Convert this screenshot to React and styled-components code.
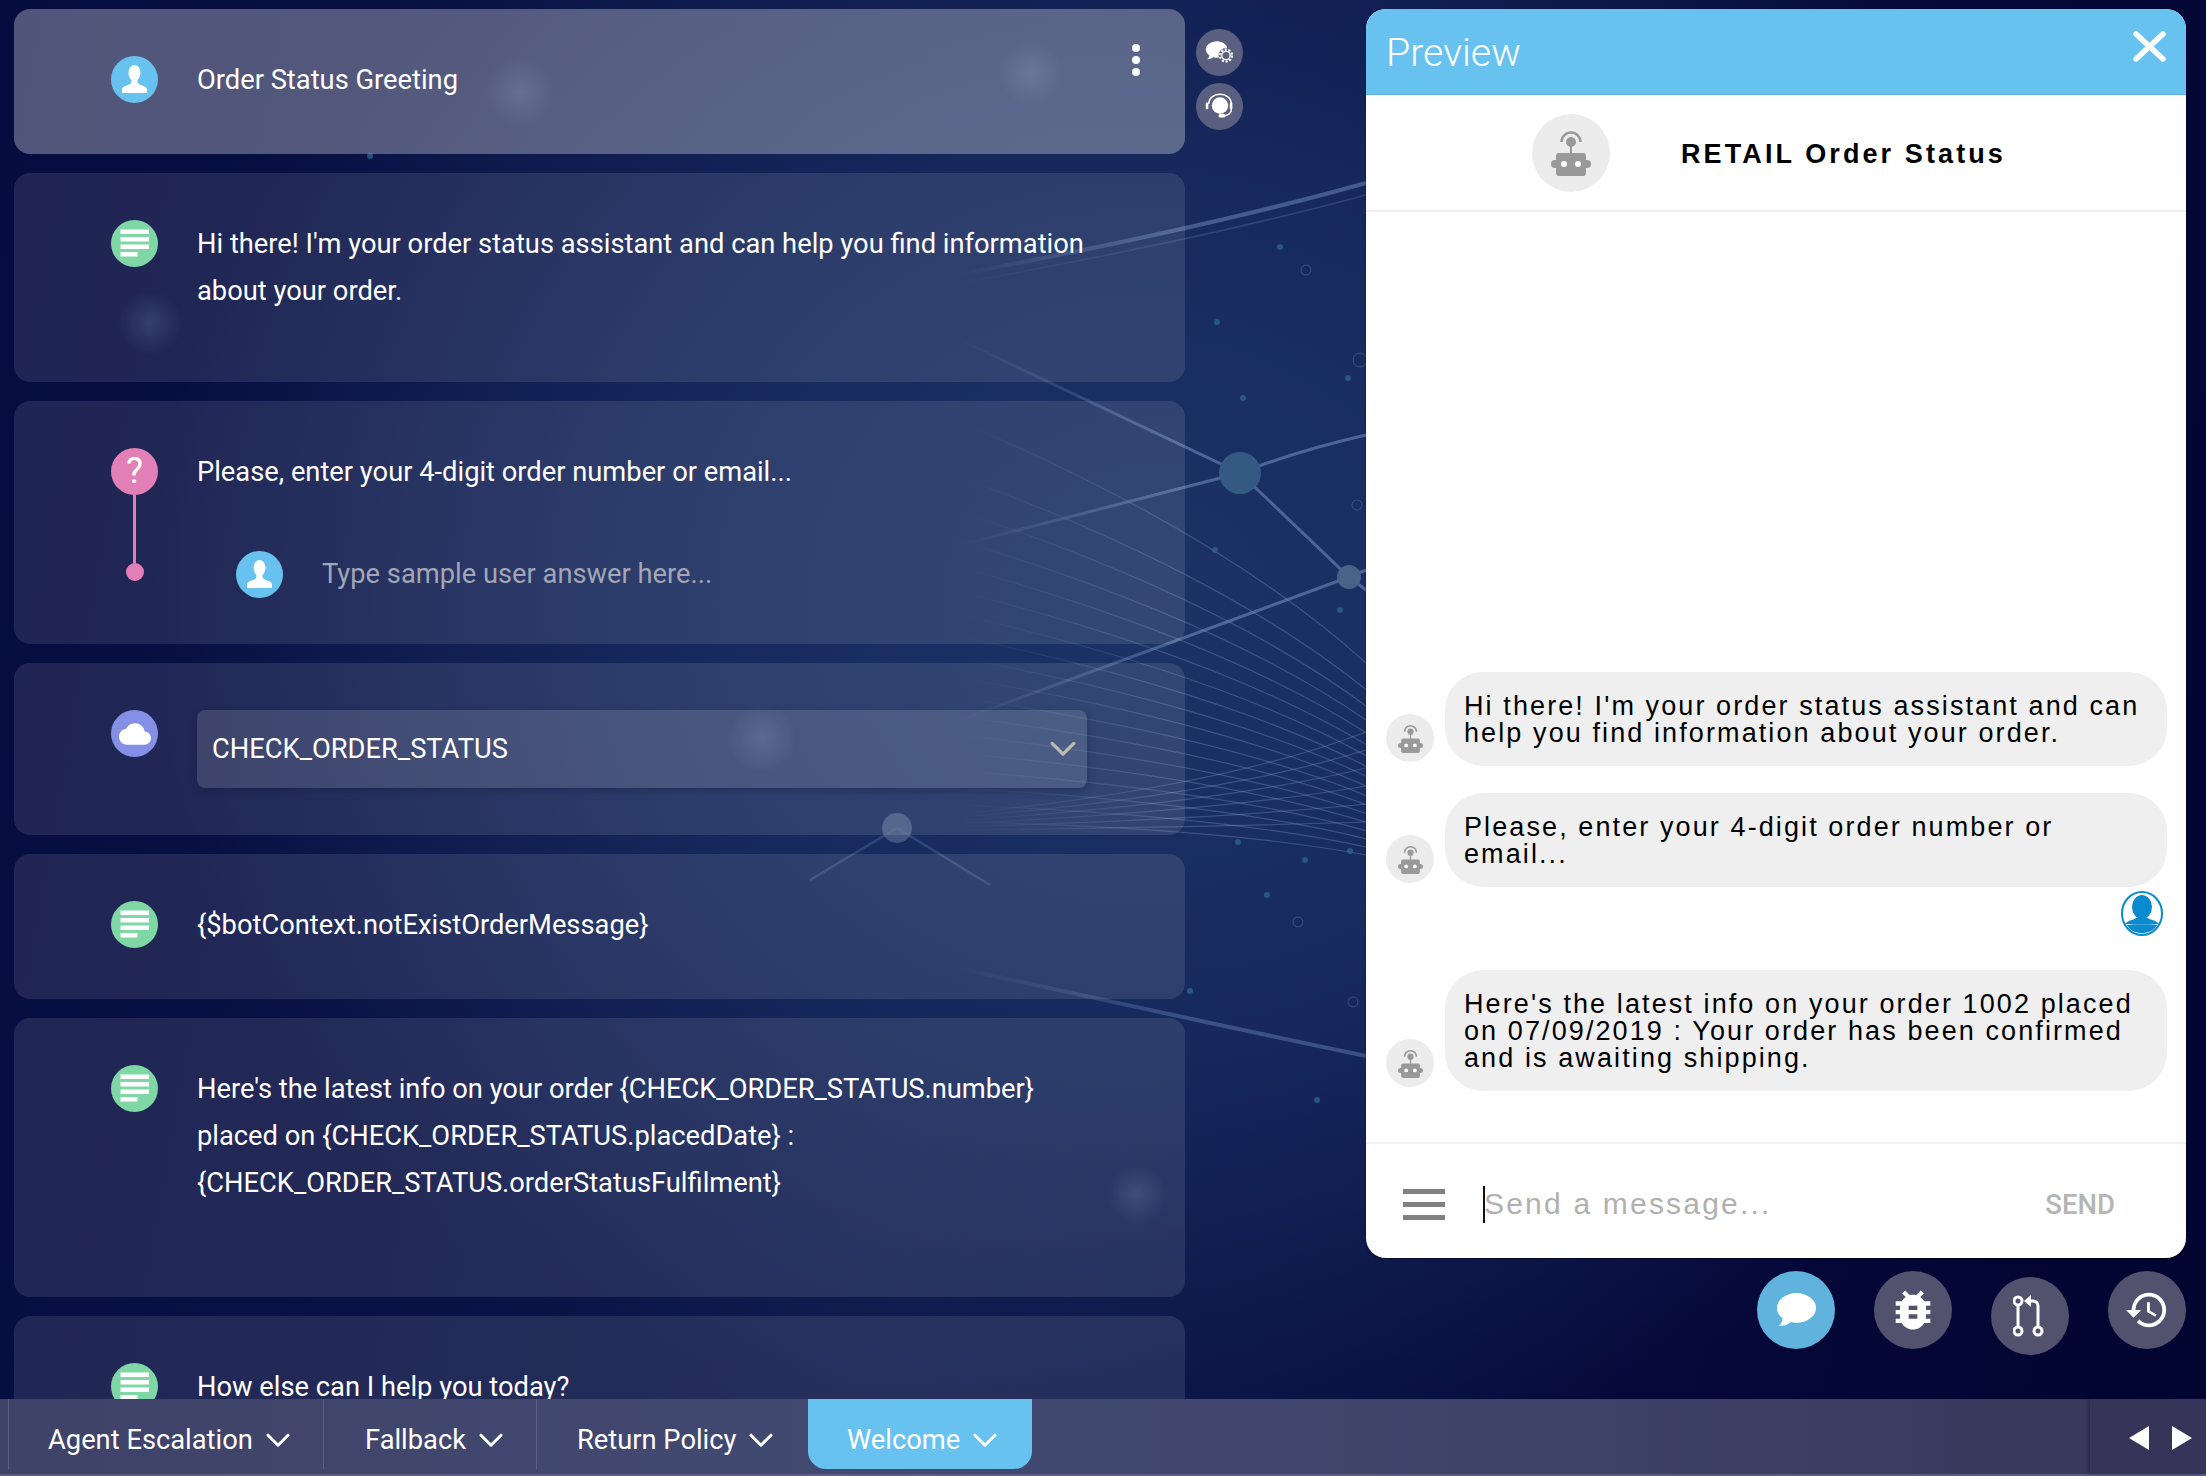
import React from 'react';
import styled, { createGlobalStyle } from 'styled-components';
import { MdBugReport, MdCloud, MdHistory } from 'react-icons/md';

const GlobalStyle = createGlobalStyle`
    html, body {
        margin: 0;
        padding: 0;
        background: #070d40;
    }
    * {
        box-sizing: border-box;
    }
`;

const Page = styled.div`
    position: relative;
    width: 2206px;
    height: 1476px;
    overflow: hidden;
    display: flex;
    flex-direction: column;
    font-family: Roboto, "Liberation Sans", sans-serif;
    background:
        radial-gradient(ellipse 1000px 900px at 1150px 600px, #1c3366 0, #172a5e 45%, rgba(10, 18, 70, 0) 100%),
        linear-gradient(100deg, #060c40 0, #0d1648 45%, #050838 80%, #020430 100%);
`;

const Backdrop = styled.svg`
    position: absolute;
    inset: 0;
    width: 2206px;
    height: 1476px;
`;

const Main = styled.main`
    position: relative;
    flex: 1;
    min-height: 0;
    display: flex;
    overflow: hidden;
`;

// FLOW COLUMN
const Flow = styled.section`
    width: 1171px;
    margin-left: 14px;
    padding-top: 9px;
    display: flex;
    flex-direction: column;
    gap: 19px;
    flex-shrink: 0;
`;

const Card = styled.article`
    position: relative;
    flex-shrink: 0;
    height: ${p => p.$height}px;
    padding: 47px 0 0 97px;
    border-radius: 16px;
    background: ${p => (p.$active ? 'rgba(255, 255, 255, 0.3)' : 'rgba(255, 255, 255, 0.1)')};
`;

const Row = styled.div`
    display: flex;
    align-items: flex-start;
    gap: 39px;
`;

const SampleRow = styled(Row)`
    margin: 55px 0 0 125px;
    gap: 39px;
`;

const NodeIcon = styled.span`
    position: relative;
    flex-shrink: 0;
    width: 47px;
    height: 47px;
    border-radius: 50%;
    display: flex;
    align-items: center;
    justify-content: center;
    color: #fff;
    background: ${p => p.$color};
    font-size: 36px;
    line-height: 47px;
`;

const Connector = styled.span`
    position: absolute;
    left: 22px;
    top: 47px;
    width: 3px;
    height: 76px;
    background: #e27fb6;

    &::after {
        content: '';
        position: absolute;
        left: -7.5px;
        bottom: -10px;
        width: 18px;
        height: 18px;
        border-radius: 50%;
        background: #e27fb6;
    }
`;

const Message = styled.p`
    margin: 0;
    padding-top: ${p => (p.$muted ? 0 : 1)}px;
    max-width: 900px;
    color: ${p => (p.$muted ? '#a2a6b6' : '#fff')};
    font-size: 27.3px;
    line-height: 47px;
`;

const DotsButton = styled.span`
    position: absolute;
    top: 35px;
    right: 45px;
    display: flex;
    flex-direction: column;
    gap: 4px;

    i {
        width: 8px;
        height: 8px;
        border-radius: 50%;
        background: #fff;
    }
`;

const Select = styled.div`
    width: 890px;
    height: 78px;
    padding: 0 11px 0 15px;
    border-radius: 8px;
    display: flex;
    align-items: center;
    justify-content: space-between;
    color: #fff;
    font-size: 27.3px;
    background: rgba(255, 255, 255, 0.13);
    box-shadow: 0 3px 8px rgba(10, 15, 50, 0.3);
`;

// SIDE RAIL
const Rail = styled.aside`
    margin-left: 11px;
    padding-top: 29px;
    display: flex;
    flex-direction: column;
    gap: 7px;
`;

const RailButton = styled.button`
    width: 47px;
    height: 47px;
    padding: 0;
    border: 0;
    border-radius: 50%;
    display: flex;
    align-items: center;
    justify-content: center;
    background: #5a5f80;
`;

// PREVIEW
const PreviewColumn = styled.div`
    margin-left: auto;
    margin-right: 20px;
    padding-top: 9px;
    width: 820px;
    display: flex;
    flex-direction: column;
`;

const Preview = styled.div`
    height: 1249px;
    border-radius: 20px;
    overflow: hidden;
    display: flex;
    flex-direction: column;
    background: #fff;
    box-shadow: 0 1px 2px rgba(0, 0, 0, 0.5);
`;

const PreviewHeader = styled.header`
    height: 86px;
    flex-shrink: 0;
    padding: 2px 20px 0 20px;
    display: flex;
    align-items: center;
    justify-content: space-between;
    background: #67c2f0;
    border-bottom: 1px solid #5eb3dd;
`;

const PreviewTitle = styled.h2`
    margin: 0;
    color: #fff;
    font-size: 39.3px;
    font-weight: 300;
`;

const CloseIcon = styled.svg`
    margin-bottom: 13px;
`;

const BotBar = styled.div`
    height: 117px;
    flex-shrink: 0;
    padding: 0 0 0 166px;
    display: flex;
    align-items: center;
    gap: 71px;
    border-bottom: 2px solid #f0f0f0;
`;

const BotName = styled.div`
    padding-top: 4px;
    font-family: "Liberation Sans", Arial, sans-serif;
    font-size: 27px;
    font-weight: 700;
    letter-spacing: 3.1px;
    color: #000;
`;

const BotAvatar = styled.span`
    flex-shrink: 0;
    width: ${p => p.$size}px;
    height: ${p => p.$size}px;
    border-radius: 50%;
    display: flex;
    align-items: center;
    justify-content: center;
    background: #ececec;
`;

const Messages = styled.div`
    flex: 1;
    min-height: 0;
    padding: 0 19px 51px 20px;
    display: flex;
    flex-direction: column;
    justify-content: flex-end;
`;

const BotRow = styled.div`
    display: flex;
    align-items: flex-end;
    gap: 11px;
    margin-top: ${p => p.$top || 0}px;

    ${BotAvatar} {
        margin-bottom: 4px;
    }
`;

const Bubble = styled.div`
    flex: 1;
    padding: 21px 19px 19px;
    border-radius: 38px;
    color: #000;
    background: #efefef;
    font-family: "Liberation Sans", Arial, sans-serif;
    font-size: 27px;
    line-height: 27px;
    letter-spacing: 2.1px;
`;

const UserRow = styled.div`
    display: flex;
    justify-content: flex-end;
    padding: 4px 4px 0 0;
    height: 50px;
`;

const Composer = styled.div`
    height: 116px;
    flex-shrink: 0;
    padding: 6px 71px 0 37px;
    display: flex;
    align-items: center;
    border-top: 2px solid #f2f2f2;
`;

const Burger = styled.span`
    width: 42px;
    display: flex;
    flex-direction: column;
    gap: 8px;
    margin-right: 38px;

    i {
        height: 5px;
        background: #808080;
    }
`;

const Caret = styled.span`
    width: 2px;
    height: 37px;
    background: #111;
`;

const Placeholder = styled.span`
    flex: 1;
    margin-left: -1px;
    color: #b0b0b0;
    font-family: "Liberation Sans", Arial, sans-serif;
    font-size: 30px;
    letter-spacing: 2.2px;
`;

const SendButton = styled.span`
    color: #b5b5b5;
    font-size: 27.5px;
    font-weight: 500;
`;

const ActionBar = styled.div`
    margin-top: 13px;
    display: flex;
    justify-content: flex-end;
    gap: 39px;
`;

const ActionButton = styled.button`
    width: 78px;
    height: 78px;
    padding: 0;
    border: 0;
    border-radius: 50%;
    display: flex;
    align-items: center;
    justify-content: center;
    color: #fff;
    background: ${p => (p.$active ? '#5fb3dc' : '#52526f')};
    margin-top: ${p => (p.$drop ? 6 : 0)}px;
`;

// TABS
const TabBar = styled.nav`
    position: relative;
    height: 77px;
    flex-shrink: 0;
    display: flex;
    background: linear-gradient(90deg, #3f4268 0, #424a72 40%, #3e4269 70%, #38365a 100%);
    border-bottom: 2px solid #5a5d80;
`;

const Tabs = styled.div`
    flex: 1;
    display: flex;
    padding-left: 8px;
`;

const Tab = styled.div`
    width: ${p => p.$width}px;
    height: 70px;
    flex-shrink: 0;
    padding: 12px 0 0 ${p => p.$inset}px;
    display: flex;
    align-items: center;
    gap: 13px;
    color: #fff;
    font-size: 27.3px;
    border-left: ${p => (p.$active ? '0' : '1px solid #5c6085')};
    border-radius: ${p => (p.$active ? '0 0 18px 18px' : '0')};
    background: ${p => (p.$active ? '#67c2f0' : 'transparent')};
`;

const Pager = styled.div`
    width: 116px;
    flex-shrink: 0;
    padding: 2px 14px 0 39px;
    display: flex;
    align-items: center;
    justify-content: space-between;
    background: #37345a;
    box-shadow: -2px 0 3px rgba(30, 28, 60, 0.5);
`;

const PagerArrow = styled.span`
    width: 0;
    height: 0;
    border-top: 12px solid transparent;
    border-bottom: 12px solid transparent;
    border-right: ${p => (p.$left ? '20px solid #fff' : '0')};
    border-left: ${p => (p.$left ? '0' : '20px solid #fff')};
`;

// DRAWN ICONS
const PersonIcon = () => (
    <svg width="47" height="47" viewBox="0 0 47 47">
        <ellipse cx="23.5" cy="17" rx="6" ry="8" fill="#fff" />
        <path d="M11 37v-3c0-3 3-4 6-5 3-1 3.5-2 3.5-5h6c0 3 .5 4 3.5 5 3 1 6 2 6 5v3z" fill="#fff" />
    </svg>
);

const LinesIcon = () => (
    <svg width="47" height="47" viewBox="0 0 47 47" fill="#fff">
        <rect x="9.5" y="9.5" width="28.5" height="4.5" />
        <rect x="9.5" y="17" width="28.5" height="4.5" />
        <rect x="9.5" y="24.5" width="28.5" height="4.5" />
        <rect x="9.5" y="32" width="17" height="4.5" />
    </svg>
);

const Chevron = ({ size = 24, color = '#fff', weight = 3 }) => (
    <svg width={size} height={size * 0.6} viewBox="0 0 24 14" fill="none">
        <path d="M2 2l10 10L22 2" stroke={color} strokeWidth={weight} strokeLinecap="round" strokeLinejoin="round" />
    </svg>
);

const RobotIcon = ({ width, height }) => (
    <svg width={width} height={height} viewBox="0 0 40 46" fill="#999">
        <path d="M10.5 12A9.5 9.5 0 0 1 29.5 12" fill="none" stroke="#999" strokeWidth="2.5" />
        <circle cx="20" cy="12" r="5" />
        <rect x="19" y="14" width="2" height="10" />
        <rect x="5" y="23" width="30" height="23" rx="3" />
        <rect x="0" y="30" width="40" height="8" rx="4" />
        <circle cx="13" cy="34" r="3" fill="#fff" />
        <circle cx="27" cy="34" r="3" fill="#fff" />
    </svg>
);

const ChatGearIcon = () => (
    <svg width="30" height="27" viewBox="0 0 40 36">
        <path d="M16 3c8 0 14 5 14 11s-6 11-14 11c-2 0-3 0-5-1-2 2-5 3-8 3 2-2 3-4 3-5-3-2-5-5-5-8C1 8 8 3 16 3z" fill="#fff" />
        <circle cx="28" cy="22" r="10" fill="#5a5f80" />
        <circle cx="28" cy="22" r="8" fill="none" stroke="#fff" strokeWidth="3" strokeDasharray="2.8 2.2" />
        <circle cx="28" cy="22" r="5.5" fill="none" stroke="#fff" strokeWidth="1.8" />
    </svg>
);

const HeadsetIcon = () => (
    <svg width="30" height="30" viewBox="0 0 40 40">
        <circle cx="20" cy="18" r="11" fill="#fff" />
        <path d="M5 16C5 8 12 3 20 3s15 5 15 13v8c0 4-5 7-10 8" fill="none" stroke="#fff" strokeWidth="2" />
        <rect x="1" y="14" width="3.5" height="9" rx="1.5" fill="#fff" />
        <rect x="33" y="14" width="3.5" height="9" rx="1.5" fill="#fff" />
        <rect x="18" y="29" width="9" height="5" rx="2.5" fill="#fff" />
    </svg>
);

const ChatIcon = () => (
    <svg width="40" height="34" viewBox="0 0 40 34" fill="#fff">
        <ellipse cx="20.5" cy="15" rx="19.5" ry="15" />
        <path d="M3 33c2-2 4-6 4-11l8 7c-4 3-8 4-12 4z" />
    </svg>
);

const BranchIcon = () => (
    <svg width="34" height="42" viewBox="0 0 34 42" fill="none" stroke="#fff" strokeWidth="3">
        <circle cx="5" cy="6" r="4" />
        <circle cx="5" cy="36" r="4" />
        <circle cx="25" cy="36" r="4" />
        <path d="M5 10v22" />
        <path d="M25 32V11c0-3-2-5-5-5h-4" />
        <path d="M18 0l-7 6 7 6z" fill="#fff" stroke="none" />
    </svg>
);

const UserBadge = () => (
    <svg width="42" height="45" viewBox="0 0 42 45">
        <ellipse cx="21" cy="22.5" rx="20" ry="21.5" fill="#fff" stroke="#0a8bcf" strokeWidth="2" />
        <ellipse cx="21" cy="16" rx="10" ry="12" fill="#0a8bcf" />
        <path d="M4 33c3-4 9-4 11-6h12c2 2 8 2 11 6-3 1-31 1-34 0z" fill="#0a8bcf" />
        <path d="M6 34h30c-3 6-9 8-15 8s-12-2-15-8z" fill="#0a8bcf" />
    </svg>
);

// BACKGROUND ART
const fanLines = Array.from({ length: 18 }, (_, i) => {
    const t = Math.pow(i / 17, 0.7);
    return `M800 ${360 + t * 460} Q1180 ${495 + t * 325} 1366 ${663 + t * 192}`;
});
const riseLines = Array.from({ length: 6 }, (_, i) => `M800 ${832 - i} Q1180 ${828 - i * 5} 1366 ${822 - i * 18}`);
const motes = [[1280, 247], [1217, 322], [1243, 398], [1348, 378], [1215, 550], [1340, 610], [1238, 842], [1305, 860], [1267, 895], [1350, 851], [1190, 991], [1317, 1100], [370, 156]];
const glows = [[520, 92, 35], [150, 323, 32], [1031, 73, 32], [762, 738, 34], [1137, 1195, 30]];

function BackgroundArt() {
    return (
        <Backdrop viewBox="0 0 2206 1476">
            <defs>
                <radialGradient id="glow">
                    <stop offset="0" stopColor="#7f9cc4" stopOpacity="0.2" />
                    <stop offset="1" stopColor="#7f9cc4" stopOpacity="0" />
                </radialGradient>
                <linearGradient id="fade" gradientUnits="userSpaceOnUse" x1="960" y1="0" x2="1190" y2="0">
                    <stop offset="0" stopColor="#8aa6d8" stopOpacity="0" />
                    <stop offset="1" stopColor="#8aa6d8" stopOpacity="1" />
                </linearGradient>
            </defs>
            <g fill="none" stroke="url(#fade)">
                {fanLines.map(d => <path key={d} d={d} strokeOpacity="0.3" strokeWidth="1.2" />)}
                {riseLines.map(d => <path key={d} d={d} strokeOpacity="0.3" strokeWidth="1.2" />)}
                <path d="M900 285Q1180 235 1366 183" strokeOpacity="0.4" strokeWidth="4" />
                <path d="M950 285Q1200 240 1366 195" strokeOpacity="0.2" strokeWidth="1.5" />
                <path d="M960 340L1240 473L1349 577L1366 590" strokeOpacity="0.45" strokeWidth="3" />
                <path d="M960 545L1240 473Q1300 450 1366 435" strokeOpacity="0.45" strokeWidth="3" />
                <path d="M960 720L1349 577L1366 570" strokeOpacity="0.45" strokeWidth="3" />
                <path d="M900 955Q1100 1000 1366 1056" strokeOpacity="0.32" strokeWidth="4" />
            </g>
            <g stroke="#8aa6d8" strokeOpacity="0.22" strokeWidth="2.5" fill="none">
                <path d="M810 880L897 828L990 885" />
            </g>
            <circle cx="1240" cy="473" r="21" fill="#345a84" />
            <circle cx="1349" cy="577" r="12" fill="#4a6288" />
            <circle cx="897" cy="828" r="15" fill="#56688f" fillOpacity="0.7" />
            {motes.map(([x, y]) => <circle key={x + '-' + y} cx={x} cy={y} r="3" fill="#2f6a8e" fillOpacity="0.7" />)}
            <g fill="none" stroke="#4a6a9a" strokeOpacity="0.6">
                <circle cx="1306" cy="270" r="5" />
                <circle cx="1360" cy="360" r="7" />
                <circle cx="1357" cy="505" r="5" />
                <circle cx="1298" cy="922" r="5" />
                <circle cx="1353" cy="1002" r="5" />
            </g>
            {glows.map(([x, y, r]) => <circle key={x + '-' + y} cx={x} cy={y} r={r} fill="url(#glow)" />)}
        </Backdrop>
    );
}

export default function App() {
    return (
        <Page>
            <GlobalStyle />
            <BackgroundArt />
            <Main>
                <Flow>
                    <Card $height={145} $active>
                        <Row>
                            <NodeIcon $color="#67c2f0"><PersonIcon /></NodeIcon>
                            <Message>Order Status Greeting</Message>
                        </Row>
                        <DotsButton><i /><i /><i /></DotsButton>
                    </Card>
                    <Card $height={209}>
                        <Row>
                            <NodeIcon $color="#7fd7a6"><LinesIcon /></NodeIcon>
                            <Message>Hi there! I'm your order status assistant and can help you find information about your order.</Message>
                        </Row>
                    </Card>
                    <Card $height={243}>
                        <Row>
                            <NodeIcon $color="#e27fb6">?<Connector /></NodeIcon>
                            <Message>Please, enter your 4-digit order number or email...</Message>
                        </Row>
                        <SampleRow>
                            <NodeIcon $color="#67c2f0"><PersonIcon /></NodeIcon>
                            <Message $muted>Type sample user answer here...</Message>
                        </SampleRow>
                    </Card>
                    <Card $height={172}>
                        <Row>
                            <NodeIcon $color="#8490e6"><MdCloud size={32} /></NodeIcon>
                            <Select>
                                CHECK_ORDER_STATUS
                                <Chevron size={26} color="#bdb9b5" />
                            </Select>
                        </Row>
                    </Card>
                    <Card $height={145}>
                        <Row>
                            <NodeIcon $color="#7fd7a6"><LinesIcon /></NodeIcon>
                            <Message>{'{$botContext.notExistOrderMessage}'}</Message>
                        </Row>
                    </Card>
                    <Card $height={279}>
                        <Row>
                            <NodeIcon $color="#7fd7a6"><LinesIcon /></NodeIcon>
                            <Message>{"Here's the latest info on your order {CHECK_ORDER_STATUS.number} placed on {CHECK_ORDER_STATUS.placedDate} : {CHECK_ORDER_STATUS.orderStatusFulfilment}"}</Message>
                        </Row>
                    </Card>
                    <Card $height={200}>
                        <Row>
                            <NodeIcon $color="#7fd7a6"><LinesIcon /></NodeIcon>
                            <Message>How else can I help you today?</Message>
                        </Row>
                    </Card>
                </Flow>

                <Rail>
                    <RailButton><ChatGearIcon /></RailButton>
                    <RailButton><HeadsetIcon /></RailButton>
                </Rail>

                <PreviewColumn>
                    <Preview>
                        <PreviewHeader>
                            <PreviewTitle>Preview</PreviewTitle>
                            <CloseIcon width="33" height="31" viewBox="0 0 33 31" stroke="#fff" strokeWidth="5.5" strokeLinecap="round">
                                <path d="M3 3l27 25M30 3L3 28" />
                            </CloseIcon>
                        </PreviewHeader>
                        <BotBar>
                            <BotAvatar $size={78}><RobotIcon width={42} height={46} /></BotAvatar>
                            <BotName>RETAIL Order Status</BotName>
                        </BotBar>
                        <Messages>
                            <BotRow>
                                <BotAvatar $size={48}><RobotIcon width={25} height={29} /></BotAvatar>
                                <Bubble>Hi there! I'm your order status assistant and can help you find information about your order.</Bubble>
                            </BotRow>
                            <BotRow $top={27}>
                                <BotAvatar $size={48}><RobotIcon width={25} height={29} /></BotAvatar>
                                <Bubble>Please, enter your 4-digit order number or email...</Bubble>
                            </BotRow>
                            <UserRow><UserBadge /></UserRow>
                            <BotRow $top={33}>
                                <BotAvatar $size={48}><RobotIcon width={25} height={29} /></BotAvatar>
                                <Bubble>Here's the latest info on your order 1002 placed on 07/09/2019 : Your order has been confirmed and is awaiting shipping.</Bubble>
                            </BotRow>
                        </Messages>
                        <Composer>
                            <Burger><i /><i /><i /></Burger>
                            <Caret />
                            <Placeholder>Send a message...</Placeholder>
                            <SendButton>SEND</SendButton>
                        </Composer>
                    </Preview>
                    <ActionBar>
                        <ActionButton $active><ChatIcon /></ActionButton>
                        <ActionButton><MdBugReport size={52} /></ActionButton>
                        <ActionButton $drop><BranchIcon /></ActionButton>
                        <ActionButton><MdHistory size={46} /></ActionButton>
                    </ActionBar>
                </PreviewColumn>
            </Main>

            <TabBar>
                <Tabs>
                    <Tab $width={315} $inset={39}>Agent Escalation <Chevron /></Tab>
                    <Tab $width={213} $inset={41}>Fallback <Chevron /></Tab>
                    <Tab $width={272} $inset={40}>Return Policy <Chevron /></Tab>
                    <Tab $width={224} $inset={39} $active>Welcome <Chevron /></Tab>
                </Tabs>
                <Pager>
                    <PagerArrow $left />
                    <PagerArrow />
                </Pager>
            </TabBar>
        </Page>
    );
}
